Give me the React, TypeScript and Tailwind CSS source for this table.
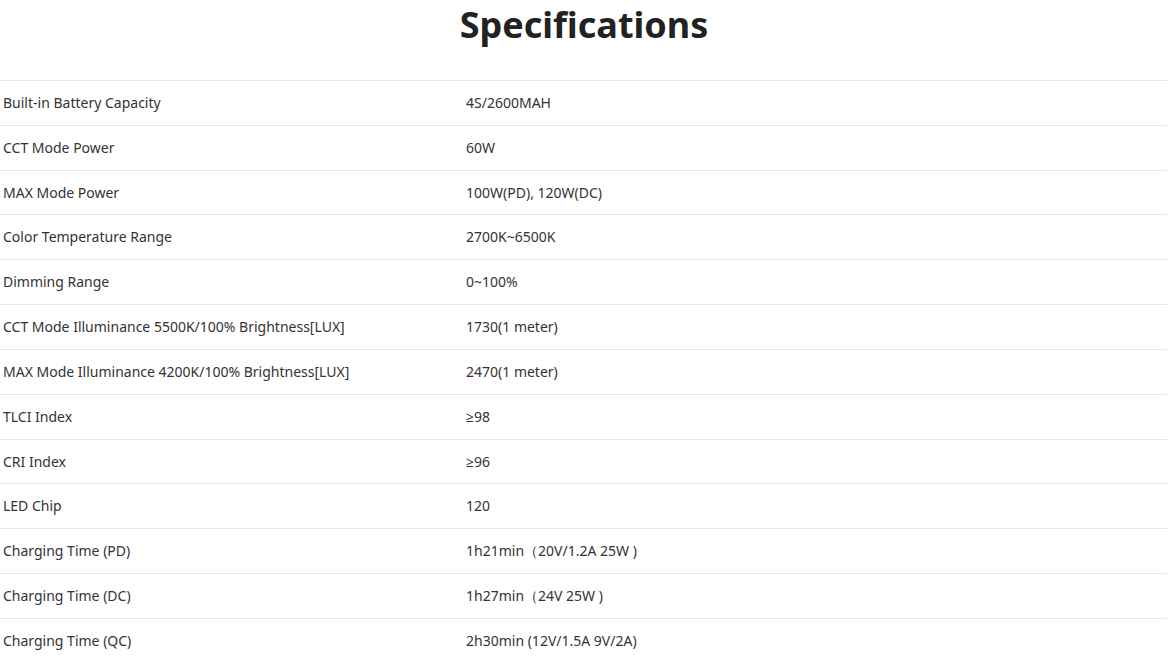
import React from "react";

const rows: [string, string][] = [
  ["Built-in Battery Capacity", "4S/2600MAH"],
  ["CCT Mode Power", "60W"],
  ["MAX Mode Power", "100W(PD), 120W(DC)"],
  ["Color Temperature Range", "2700K~6500K"],
  ["Dimming Range", "0~100%"],
  ["CCT Mode Illuminance 5500K/100% Brightness[LUX]", "1730(1 meter)"],
  ["MAX Mode Illuminance 4200K/100% Brightness[LUX]", "2470(1 meter)"],
  ["TLCI Index", "≥98"],
  ["CRI Index", "≥96"],
  ["LED Chip", "120"],
  ["Charging Time (PD)", "1h21min（20V/1.2A 25W )"],
  ["Charging Time (DC)", "1h27min（24V 25W )"],
  ["Charging Time (QC)", "2h30min (12V/1.5A 9V/2A)"],
];

export default function App() {
  return (
    <div className="w-[1168px] h-[661px] overflow-hidden bg-white" style={{ fontFamily: '"Noto Sans", "Open Sans", sans-serif' }}>
      <h2 className="text-center text-[36px] leading-[50px] font-bold text-[#222] mb-[30px]">Specifications</h2>
      <div className="w-[1167px]">
        {rows.map(([k, v]) => (
          <div key={k} className="grid grid-cols-[463px_1fr] items-center h-[44.83px] border-t border-[#e6e6e6] text-[14px] leading-[20px] text-[#333]">
            <div className="px-[3px]">{k}</div>
            <div className="px-[3px]">{v}</div>
          </div>
        ))}
      </div>
    </div>
  );
}
